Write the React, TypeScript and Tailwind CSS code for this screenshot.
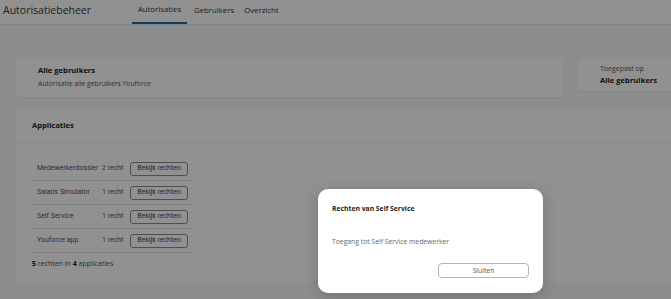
import { Fragment } from 'react'

const apps = [
  { name: 'Medewerkerdossier', count: '2 recht' },
  { name: 'Salaris Simulator', count: '1 recht' },
  { name: 'Self Service', count: '1 recht' },
  { name: 'Youforce app', count: '1 recht' },
]

const tabs = [
  { label: 'Autorisaties', cls: 'w-[55px] justify-center border-b-2 border-[#0e6fb6]' },
  { label: 'Gebruikers', cls: 'pl-[7px] pr-[10px]' },
  { label: 'Overzicht', cls: '' },
]

function Header() {
  return (
    <header className="flex h-[25px] items-stretch border-b border-[#e6e7ea] bg-white">
      <h1 className="w-[132px] shrink-0 pl-[3px] pt-[3px] text-[10.5px] text-[#3a3a3a]">Autorisatiebeheer</h1>
      <nav className="flex items-stretch">
        {tabs.map((tab) => (
          <div
            key={tab.label}
            className={`flex items-center pb-[3px] text-[7.8px] font-medium text-[#333] ${tab.cls}`}
          >
            {tab.label}
          </div>
        ))}
      </nav>
    </header>
  )
}

function AppRow({ name, count }: { name: string; count: string }) {
  return (
    <div className="flex h-[24px] items-center border-b border-[#e6e7ea] pl-[5px] font-['Roboto',sans-serif] text-[7px] text-[#555]">
      <span className="w-[65px] shrink-0">{name}</span>
      <span className="w-[28px] shrink-0">{count}</span>
      <button className="h-[14px] w-[58px] shrink-0 rounded-[3px] border border-[#8c8c8c] bg-white text-[7px] text-[#444]">
        Bekijk rechten
      </button>
    </div>
  )
}

export default function App() {
  return (
    <div className="relative h-[299px] w-[671px] overflow-hidden bg-[#f7f8f9] font-['Open_Sans',sans-serif]">
      <Header />

      <main className="px-[16px] pt-[33px]">
        <div className="flex gap-[15px]">
          <section className="h-[39px] w-[547px] shrink-0 rounded-[4px] bg-white pl-[22px] pt-[7px] shadow-[0_1px_2px_rgba(0,0,0,0.06)]">
            <h2 className="text-[7.6px] font-bold text-[#222]">Alle gebruikers</h2>
            <p className="mt-[3px] text-[6.8px] text-[#555]">Autorisatie alle gebruikers Youforce</p>
          </section>
          <section className="h-[33px] w-[120px] shrink-0 rounded-[4px] bg-white pl-[22px] pt-[6px] shadow-[0_1px_2px_rgba(0,0,0,0.06)]">
            <p className="text-[7px] text-[#555]">Toegepast op</p>
            <p className="text-[7.6px] font-bold text-[#222]">Alle gebruikers</p>
          </section>
        </div>

        <section className="mt-[11px] mr-[-16px] h-[174px] bg-white">
          <div className="h-[35px] border-b border-[#eceef0] pl-[16px] pt-[12px]">
            <h2 className="text-[7.6px] font-bold text-[#222]">Applicaties</h2>
          </div>
          <div className="w-[177px] pl-[16px] pt-[14px]">
            {apps.map((a) => (
              <Fragment key={a.name}>
                <AppRow name={a.name} count={a.count} />
              </Fragment>
            ))}
            <p className="mt-[6px] text-[7px] text-[#555]">
              <b className="text-[#222]">5</b> rechten in <b className="text-[#222]">4</b> applicaties
            </p>
          </div>
        </section>
      </main>

      <div className="absolute inset-0 bg-black/[0.43]" />

      <div className="absolute left-[318px] top-[189px] h-[104px] w-[225px] rounded-[10px] bg-white px-[14px] pt-[15px] shadow-[0_4px_16px_rgba(0,0,0,0.2)]">
        <h3 className="text-[6.8px] font-bold text-[#222]">Rechten van Self Service</h3>
        <p className="mt-[23px] text-[6.8px] text-[#666]">Toegang tot Self Service medewerker</p>
        <div className="mt-[16px] flex justify-end">
          <button className="h-[15px] w-[91px] rounded-[4px] border border-[#b5b5b5] bg-white text-[6.8px] text-[#555]">
            Sluiten
          </button>
        </div>
      </div>
    </div>
  )
}
